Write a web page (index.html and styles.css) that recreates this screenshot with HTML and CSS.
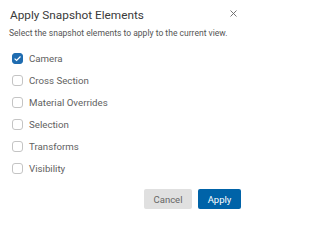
FILE: index.html
```html
<!DOCTYPE html>
<html>
<head>
<meta charset="utf-8">
<link rel="stylesheet" href="styles.css">
</head>
<body>
<div class="dialog">
  <div class="header">
    <div class="title">Apply Snapshot Elements</div>
    <button class="close" aria-label="Close">
      <svg width="7" height="7" viewBox="0 0 7 7"><path d="M0.5 0.5L6.5 6.5M6.5 0.5L0.5 6.5" stroke="#666" stroke-width="0.9" fill="none"/></svg>
    </button>
  </div>
  <div class="subtitle">Select the snapshot elements to apply to the current view.</div>
  <ul class="list">
    <li class="item"><span class="box checked"><svg width="11" height="11" viewBox="0 0 11 11"><path d="M2.6 5.6L4.6 7.5L8.5 3.5" stroke="#fff" stroke-width="1.2" fill="none"/></svg></span><span class="label">Camera</span></li>
    <li class="item"><span class="box"></span><span class="label">Cross Section</span></li>
    <li class="item"><span class="box"></span><span class="label">Material Overrides</span></li>
    <li class="item"><span class="box"></span><span class="label">Selection</span></li>
    <li class="item"><span class="box"></span><span class="label">Transforms</span></li>
    <li class="item"><span class="box"></span><span class="label">Visibility</span></li>
  </ul>
  <div class="footer">
    <button class="btn cancel">Cancel</button>
    <button class="btn apply">Apply</button>
  </div>
</div>
</body>
</html>
```
FILE: styles.css
```css
html, body {
  margin: 0;
  padding: 0;
  background: #fff;
}
body {
  font-family: Roboto, "Liberation Sans", sans-serif;
  color: #333;
}
.dialog {
  width: 253px;
  height: 222px;
  box-sizing: border-box;
  padding: 7px 12px 0 9px;
}
.header {
  display: flex;
  justify-content: space-between;
  align-items: flex-start;
  height: 18px;
}
.title {
  font-size: 11.8px;
  line-height: 16px;
  color: #3a3a3a;
  padding-left: 1px;
}
.close {
  border: 0;
  background: none;
  padding: 0;
  margin-top: 3px;
  margin-right: 4px;
  width: 7px;
  height: 7px;
  display: block;
}
.close svg { display: block; }
.subtitle {
  font-size: 8.55px;
  line-height: 11px;
  color: #555;
  margin-top: 3px;
}
.list {
  list-style: none;
  margin: 8px 0 0 0;
  padding: 0 0 0 3px;
}
.item {
  display: flex;
  align-items: center;
  height: 22px;
}
.box {
  width: 11px;
  height: 11px;
  box-sizing: border-box;
  border: 1px solid #c4c4c4;
  border-radius: 3px;
  background: #fff;
  flex: none;
}
.box.checked {
  background: #1f6cb0;
  border-color: #1f6cb0;
  position: relative;
}
.box.checked svg {
  position: absolute;
  left: -1px;
  top: -1px;
}
.label {
  font-size: 9.7px;
  color: #616161;
  margin-left: 6px;
}
.footer {
  display: flex;
  justify-content: flex-end;
  gap: 6px;
  margin-top: 10px;
}
.btn {
  border: 0;
  border-radius: 2px;
  height: 20px;
  font-family: Roboto, "Liberation Sans", sans-serif;
  font-size: 9.5px;
  padding: 0;
}
.cancel {
  width: 48px;
  background: #e0e0e0;
  color: #666;
}
.apply {
  width: 43px;
  background: #0063a8;
  color: #fff;
}
```
